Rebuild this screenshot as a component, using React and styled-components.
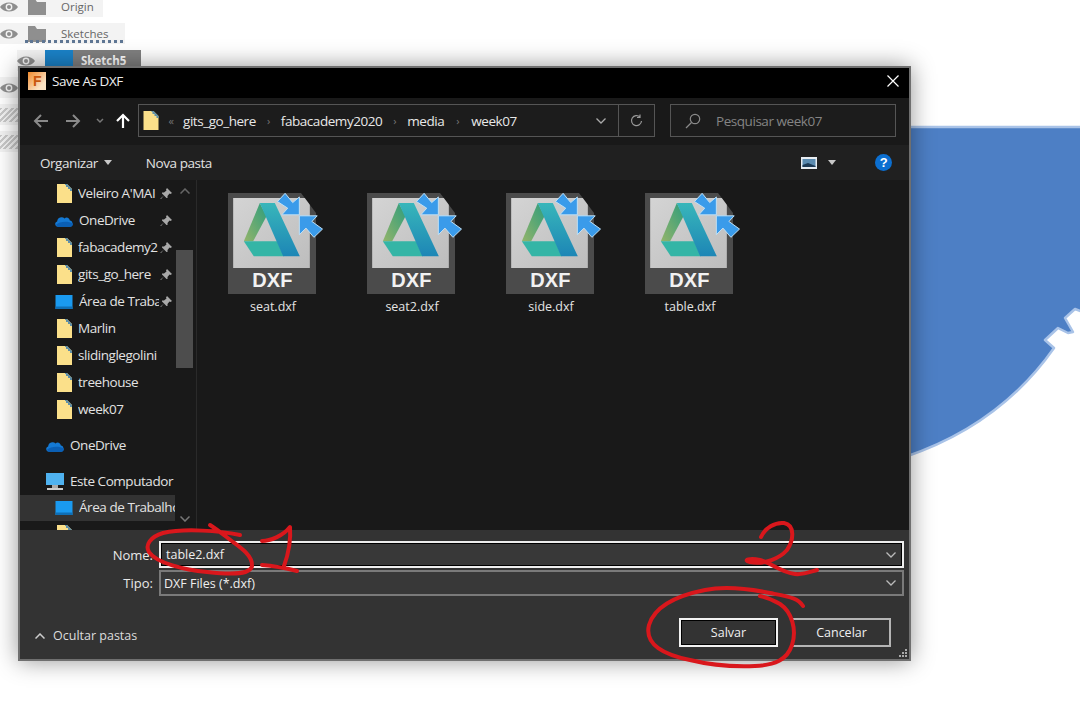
import React from "react";
import styled, { createGlobalStyle } from "styled-components";

const Global = createGlobalStyle`
  html, body { margin: 0; padding: 0; background: #fff; }
  body { font-family: "Open Sans", "Noto Sans", "Liberation Sans", sans-serif; }
`;

const Page = styled.div`
  position: relative; width: 1080px; height: 712px; overflow: hidden; background: #fff;
`;

/* background: Fusion browser tree */
const Tree = styled.div`
  display: flex; flex-direction: column; gap: 6px; margin-top: -4px; align-items: flex-start;
`;
const TreeRow = styled.div`
  position: relative; display: flex; align-items: center; height: 21px;
  margin-left: ${p => p.$indent || 0}px; width: ${p => p.$w}px; background: #f3f3f3;
  font-size: 11.5px; color: #666;
`;
const Eye = styled.svg`width: 18px; height: 12px; flex: none;`;
const TreeFolder = styled.svg`width: 18px; height: 16px; flex: none; margin: 0 15px 0 10px;`;
const Squiggle = styled.span`
  position: absolute; left: 25px; right: 2px; bottom: 1px; border-bottom: 3px dotted #5f7795;
`;
const SketchTile = styled.span`width: 28px; height: 21px; flex: none; margin-left: 10px; background: #1b83c9;`;
const SketchLabel = styled.span`
  flex: 1; height: 21px; line-height: 21px; padding-left: 8px; background: #808080; color: #fff; font-weight: 700;
`;
const EyeIcon = ({ c = "#8e8e8e" }) => (
  <Eye viewBox="0 0 18 12"><path d="M0 6C4 0 14 0 18 6 14 12 4 12 0 6Z" fill={c} /><circle cx="9" cy="6" r="3.4" fill="#f3f3f3" /><circle cx="9" cy="6" r="2" fill={c} /></Eye>
);
const TreeFolderIcon = () => (
  <TreeFolder viewBox="0 0 18 16"><path d="M0 0H7L9 3H18V16H0Z" fill="#8f8f8f" /></TreeFolder>
);
const Hatch = styled.span`
  width: 18px; height: 14px; flex: none;
  background: repeating-linear-gradient(135deg, #c9c9c9 0 2px, #f3f3f3 2px 4px);
`;

const Canvas = styled.svg`position: absolute; inset: 0; width: 1080px; height: 712px;`;

/* dialog */
const Dialog = styled.div`
  position: absolute; left: 18px; top: 66px; width: 889px; height: 591px;
  border: 2px solid #6f6f6f; display: flex; flex-direction: column; background: #191919;
  color: #e4e4e4; font-size: 13.5px; letter-spacing: -.45px; box-shadow: 0 0 22px rgba(0,0,0,.42);
`;
const TitleBar = styled.div`
  height: 30px; flex: none; background: #000; display: flex; align-items: center; padding: 0 8px 4px 8px; gap: 6px; box-sizing: border-box;
`;
const Title = styled.span`flex: 1; font-size: 13.5px; color: #eee;`;
const AppIcon = styled.span`
  width: 18px; height: 18px; flex: none; display: flex; align-items: center; justify-content: center;
  background: linear-gradient(135deg, #f08a2c, #fbe2c3 75%); color: #c9570d; font: 700 14px "Liberation Sans", sans-serif;
`;
const Close = styled.svg`width: 12px; height: 12px; margin-right: 2px; flex: none;`;

const AddressRow = styled.div`
  height: 47px; flex: none; display: flex; align-items: center; background: #191919; padding-left: 13px; box-sizing: border-box; padding-bottom: 2px;
`;
const NavIcon = styled.svg`width: ${p => p.$w || 16}px; height: 16px; flex: none; margin-right: ${p => p.$mr || 0}px;`;
const AddressBox = styled.div`
  width: 517px; height: 33px; box-sizing: border-box; border: 1px solid #555; display: flex; align-items: center;
  margin-left: 8px; padding-left: 4px; flex: none; background: #1c1c1c;
`;
const Crumb = styled.span`font-size: 13.5px; color: #e8e8e8; white-space: nowrap;`;
const Sep = styled.span`width: ${p => p.$w || 25}px; text-align: center; color: #777; font-size: 11px; flex: none;`;
const Spring = styled.span`flex: 1;`;
const BoxButton = styled.span`
  width: 35px; height: 31px; flex: none; border-left: 1px solid #555; display: flex; align-items: center; justify-content: center; margin-left: 12px;
`;
const SearchBox = styled.div`
  width: 226px; height: 33px; box-sizing: border-box; border: 1px solid #555; margin-left: 15px; flex: none;
  display: flex; align-items: center; gap: 15px; padding-left: 14px; color: #848484; font-size: 13.5px; background: #1c1c1c;
`;

const ToolBar = styled.div`
  height: 35px; flex: none; background: #202020; display: flex; align-items: center; padding-left: 20px; padding-right: 17px;
`;
const ToolText = styled.span`font-size: 13.5px; color: #e2e2e2; margin-right: ${p => p.$mr || 0}px;`;
const Caret = styled.span`
  width: 0; height: 0; border: 4.5px solid transparent; border-top: 5px solid #c9c9c9; border-bottom: 0; flex: none;
  margin-left: ${p => p.$ml || 0}px; margin-right: ${p => p.$mr || 0}px;
`;
const ViewIcon = styled.svg`width: 16px; height: 12px; flex: none;`;
const Help = styled.span`
  width: 17px; height: 17px; border-radius: 50%; background: #0c6fd0; color: #fff; flex: none; margin-left: 39px;
  display: flex; align-items: center; justify-content: center; font: 700 13px "Liberation Sans", sans-serif;
`;

const Main = styled.div`flex: 1; min-height: 0; display: flex; background: #191919; overflow: hidden;`;
const Side = styled.div`width: 155px; flex: none; overflow: hidden; display: flex; flex-direction: column;`;
const SideRow = styled.div`
  height: ${p => p.$h || 27}px; flex: none; display: flex; align-items: center; box-sizing: border-box;
  padding-left: ${p => p.$pad || 37}px; margin-top: ${p => p.$mt || 0}px; gap: 6px;
  background: ${p => p.$active ? "#333" : "transparent"}; position: relative;
  font-size: 13.5px; color: #e2e2e2; white-space: nowrap;
`;
const SideLabel = styled.span`flex: 1; min-width: 0; overflow: hidden; margin-bottom: 2px;`;
const Pin = styled.svg`width: 12px; height: 12px; flex: none; margin: 0 3px 0 -5px;`;
const Scroll = styled.div`
  width: 17px; flex: none; margin: 0 3px 0 1px; display: flex; flex-direction: column; align-items: center; background: #191919;
`;
const ScrollEnd = styled.svg`width: 10px; height: 6px; flex: none; margin: ${p => p.$m};`;
const Thumb = styled.div`width: 17px; height: 118px; background: #4d4d4d; flex: none; margin-top: ${p => p.$mt}px;`;
const Files = styled.div`
  flex: 1; border-left: 1px solid #2a2a2a; display: flex; align-items: flex-start; gap: 45px; padding: 13px 0 0 31px; background: #191919;
`;
const FileCell = styled.div`width: 94px; display: flex; flex-direction: column; align-items: flex-start; flex: none;`;
const TileWrap = styled.div`position: relative; width: 88px; height: 101px; flex: none;`;
const Tile = styled.div`
  width: 88px; height: 101px; background: #4b4b4b; box-sizing: border-box; padding: 5px 5px 0 5px;
  display: flex; flex-direction: column; align-items: flex-start;
  clip-path: polygon(0 0, 73px 0, 88px 20px, 88px 100%, 0 100%);
`;
const Art = styled.svg`width: 77px; height: 70px; flex: none; display: block;`;
const DxfMark = styled.span`
  width: 79px; text-align: center; font: 700 20px/25px "Liberation Sans", sans-serif; color: #f2f2f2; letter-spacing: .2px;
`;
const Arrows = styled.svg`position: absolute; left: 47px; top: -2px; width: 50px; height: 48px;`;
const FileName = styled.span`width: 90px; text-align: center; margin-top: 4px; font-size: 12.5px; letter-spacing: 0; color: #e4e4e4;`;

const Bottom = styled.div`
  position: relative; height: 129px; flex: none; background: #333; box-sizing: border-box; padding: 11px 5px 0 0; display: flex; flex-direction: column;
  letter-spacing: 0;
`;
const Field = styled.div`display: flex; align-items: center; gap: 6px; margin-bottom: 2px;`;
const FieldLabel = styled.span`width: 133px; flex: none; text-align: right; font-size: 13px; color: #e8e8e8;`;
const Input = styled.div`
  flex: 1; height: ${p => p.$h}px; box-sizing: border-box; display: flex; align-items: center; justify-content: space-between;
  border: 2px solid ${p => p.$focus ? "#eee" : "#7a7a7a"}; box-shadow: ${p => p.$focus ? "inset 0 0 0 1px #000" : "none"};
  padding: 0 6px 0 ${p => p.$focus ? 5 : 3}px; background: #383838; font-size: 12.5px; color: #eee;
`;
const Chevron = styled.svg`width: 10px; height: 6px; flex: none;`;
const Footer = styled.div`display: flex; align-items: center; margin-top: 20px; padding-right: 13px;`;
const Hide = styled.span`
  flex: 1; display: flex; align-items: center; gap: 8px; padding-left: 15px; font-size: 12.5px; color: #ddd; margin-top: 6px;
`;
const Btn = styled.div`
  width: 99px; height: 29px; box-sizing: border-box; display: flex; align-items: center; justify-content: center; margin-left: ${p => p.$ml || 0}px;
  border: 2px solid ${p => p.$primary ? "#f2f2f2" : "#b5b5b5"}; box-shadow: ${p => p.$primary ? "inset 0 0 0 1px #000" : "none"};
  background: #333; color: #f0f0f0; font-size: 12.5px;
`;
const Grip = styled.svg`position: absolute; right: 1px; bottom: 1px; width: 10px; height: 10px;`;
const Ink = styled.svg`position: absolute; inset: 0; width: 1080px; height: 712px; pointer-events: none;`;

const FolderIcon = ({ w = 15, h = 19 }) => (
  <svg width={w} height={h} viewBox="0 0 15 19" style={{ flex: "none" }}>
    <path d="M0 0H10L15 5V19H0Z" fill="#fbe08a" />
    <path d="M8 0H10L15 5V7H13V5H11V3H9V1H8Z" fill="#5f8fa8" />
  </svg>
);
const Cloud = () => (
  <svg width="18" height="13" viewBox="0 0 17 12" style={{ flex: "none" }}>
    <path d="M3 12C0 12-1 8 2 7 2 3 7 2 9 4 11 2 14 4 14 6 17 6 18 12 14 12Z" fill="#1479d4" />
    <path d="M1 10C4 7 12 6 17 9 17 11 15 12 14 12H3C2 12 1.400 11 1 10Z" fill="#0a5fb5" />
  </svg>
);
const Screen = () => (
  <svg width="18" height="14" viewBox="0 0 17 14" style={{ flex: "none" }}>
    <rect width="17" height="14" fill="#1a9af0" /><rect y="11.500" width="17" height="2.500" fill="#0f6fb5" />
  </svg>
);
const Computer = () => (
  <svg width="18" height="18" viewBox="0 0 18 18" style={{ flex: "none" }}>
    <rect width="18" height="12" fill="#4fb2f0" /><rect x="6" y="12" width="6" height="3" fill="#aaa" /><rect x="1" y="15" width="16" height="2" fill="#ccc" />
  </svg>
);
const PinIcon = () => (
  <Pin viewBox="0 0 12 12"><path d="M7 0L12 5 10.500 6 9.500 5.500 7.500 8 7.500 10 6.500 10 4 7.500 1 11 .5 11 .5 10.500 4 7.500 2 5.500 2 4.500 4 4.500 6.500 2.500 6 1.500Z" fill="#a9a9a9" /></Pin>
);

const DxfIcon = ({ id }) => (
  <TileWrap>
    <Tile>
      <Art viewBox="40 40 230 210">
        <defs>
          <linearGradient id={`p${id}`} x1="0" y1="0" x2="1" y2="1"><stop offset="0" stopColor="#d4d4d4" /><stop offset="1" stopColor="#bdbdbd" /></linearGradient>
          <linearGradient id={`r${id}`} x1="0" y1="0" x2="0" y2="1"><stop offset="0" stopColor="#38b6ba" /><stop offset="1" stopColor="#1d86b6" /></linearGradient>
          <linearGradient id={`l${id}`} x1="1" y1="0" x2="0" y2="1"><stop offset="0" stopColor="#2f9d7c" /><stop offset="1" stopColor="#93b46a" /></linearGradient>
        </defs>
        <rect x="40" y="40" width="230" height="210" fill={`url(#p${id})`} />
        <path d="M120 55L140 95 100 170H72Z" fill={`url(#l${id})`} />
        <path d="M72 170H172L192 215H102Z" fill="#34b5a6" />
        <path d="M120 55H165L240 215H190Z" fill={`url(#r${id})`} />
      </Art>
      <DxfMark>DXF</DxfMark>
    </Tile>
    <Arrows viewBox="165 20 150 145">
      <path d="M238 92H185L203 72 172 52 195 27 218 55 238 38Z" fill="#3a9bea" stroke="#bfe0f5" strokeWidth="3" />
      <path d="M238 95H292L276 112 308 135 282 160 258 132 238 152Z" fill="#3a9bea" stroke="#bfe0f5" strokeWidth="3" />
    </Arrows>
  </TileWrap>
);

const pinned = [
  ["folder", "Veleiro A'MAI"], ["cloud", "OneDrive"], ["folder", "fabacademy2"], ["folder", "gits_go_here"], ["screen", "Área de Traba"],
];
const recent = ["Marlin", "slidinglegolini", "treehouse", "week07"];
const files = ["seat.dxf", "seat2.dxf", "side.dxf", "table.dxf"];
const sideIcon = { folder: <FolderIcon />, cloud: <Cloud />, screen: <Screen /> };

export default function App() {
  return (
    <Page>
      <Global />
      <Tree>
        <TreeRow $w={103}><EyeIcon /><TreeFolderIcon />Origin</TreeRow>
        <TreeRow $w={125}><EyeIcon /><TreeFolderIcon />Sketches<Squiggle /></TreeRow>
        <TreeRow $w={124} $indent={17}><EyeIcon /><SketchTile /><SketchLabel>Sketch5</SketchLabel></TreeRow>
        <TreeRow $w={18}><EyeIcon /></TreeRow>
        <TreeRow $w={18}><Hatch /></TreeRow>
        <TreeRow $w={18}><Hatch /></TreeRow>
      </Tree>
      <Canvas viewBox="0 0 1080 712">
        <path d="M800 127H1083V312L1075 309 1065 318 1073 332 1068 333 1058 328 1045 340 1054 348Q1000 425 905 457H800Z" fill="#4d7fc5" stroke="#a9c3e8" strokeWidth="2.500" strokeLinejoin="round" />
      </Canvas>
      <Dialog>
        <TitleBar>
          <AppIcon>F</AppIcon>
          <Title>Save As DXF</Title>
          <Close viewBox="0 0 12 12"><path d="M.5.5L11.500 11.500M11.500.5L.5 11.500" stroke="#fff" strokeWidth="1.200" /></Close>
        </TitleBar>
        <AddressRow>
          <NavIcon $mr={16} viewBox="0 0 16 16"><path d="M15 8H2M8 2L2 8 8 14" fill="none" stroke="#8a8a8a" strokeWidth="2" /></NavIcon>
          <NavIcon $mr={14} viewBox="0 0 16 16"><path d="M1 8H14M8 2L14 8 8 14" fill="none" stroke="#8a8a8a" strokeWidth="2" /></NavIcon>
          <NavIcon $w={10} $mr={11} viewBox="0 0 10 16"><path d="M2 6L5 9 8 6" fill="none" stroke="#777" strokeWidth="1.500" /></NavIcon>
          <NavIcon $w={14} viewBox="0 0 14 16"><path d="M7 15V2M1 8L7 2 13 8" fill="none" stroke="#fff" strokeWidth="2.200" /></NavIcon>
          <AddressBox>
            <FolderIcon w={16} h={19} />
            <Sep $w={24}>«</Sep>
            <Crumb>gits_go_here</Crumb><Sep>›</Sep>
            <Crumb>fabacademy2020</Crumb><Sep>›</Sep>
            <Crumb>media</Crumb><Sep $w={27}>›</Sep>
            <Crumb>week07</Crumb>
            <Spring />
            <Chevron viewBox="0 0 10 6"><path d="M.5.5L5 5 9.500.5" fill="none" stroke="#aaa" strokeWidth="1.300" /></Chevron>
            <BoxButton>
              <svg width="13" height="13" viewBox="0 0 13 13"><path d="M10 3A5 5 0 1 0 11.500 7M10 .5V3.500H7" fill="none" stroke="#999" strokeWidth="1.200" /></svg>
            </BoxButton>
          </AddressBox>
          <SearchBox>
            <svg width="16" height="16" viewBox="0 0 16 16" style={{ flex: "none" }}><circle cx="10" cy="6" r="4.700" fill="none" stroke="#8a8a8a" strokeWidth="1.200" /><path d="M6.500 9.500L1 15" stroke="#8a8a8a" strokeWidth="1.300" /></svg>
            Pesquisar week07
          </SearchBox>
        </AddressRow>
        <ToolBar>
          <ToolText>Organizar</ToolText>
          <Caret $ml={6} $mr={34} />
          <ToolText>Nova pasta</ToolText>
          <Spring />
          <ViewIcon viewBox="0 0 16 12"><rect width="16" height="12" fill="#e8edf2" /><rect x="1.500" y="2" width="13" height="8" fill="#5b8bb0" /><path d="M1.500 8L7 6 14.500 9V10H1.500Z" fill="#1d3a55" /></ViewIcon>
          <Caret $ml={11} />
          <Help>?</Help>
        </ToolBar>
        <Main>
          <Side>
            {pinned.map(([k, t]) => (
              <SideRow key={t} $pad={k === "cloud" || k === "screen" ? 35 : 37}>
                {sideIcon[k]}<SideLabel>{t}</SideLabel><PinIcon />
              </SideRow>
            ))}
            {recent.map(t => <SideRow key={t}><FolderIcon /><SideLabel>{t}</SideLabel></SideRow>)}
            <SideRow $mt={9} $pad={26}><Cloud /><SideLabel>OneDrive</SideLabel></SideRow>
            <SideRow $mt={9} $pad={26}><Computer /><SideLabel>Este Computador</SideLabel></SideRow>
            <SideRow $active $pad={35} $h={26}><Screen /><SideLabel>Área de Trabalho</SideLabel></SideRow>
            <SideRow $pad={37}><FolderIcon /></SideRow>
          </Side>
          <Scroll>
            <ScrollEnd $m="8px 0 0" viewBox="0 0 10 6"><path d="M.5 5.500L5 1 9.500 5.500" fill="none" stroke="#666" strokeWidth="1.500" /></ScrollEnd>
            <Thumb $mt={56} />
            <Spring />
            <ScrollEnd $m="0 0 8px" viewBox="0 0 10 6"><path d="M.5.5L5 5 9.500.5" fill="none" stroke="#777" strokeWidth="1.500" /></ScrollEnd>
          </Scroll>
          <Files>
            {files.map((f, i) => (
              <FileCell key={f}>
                <DxfIcon id={i} />
                <FileName>{f}</FileName>
              </FileCell>
            ))}
          </Files>
        </Main>
        <Bottom>
          <Field>
            <FieldLabel>Nome:</FieldLabel>
            <Input $focus $h={27}>table2.dxf<Chevron viewBox="0 0 10 6"><path d="M.5.5L5 5 9.500.5" fill="none" stroke="#bbb" strokeWidth="1.300" /></Chevron></Input>
          </Field>
          <Field>
            <FieldLabel>Tipo:</FieldLabel>
            <Input $h={26}>DXF Files (*.dxf)<Chevron viewBox="0 0 10 6"><path d="M.5.5L5 5 9.500.5" fill="none" stroke="#bbb" strokeWidth="1.300" /></Chevron></Input>
          </Field>
          <Footer>
            <Hide>
              <svg width="10" height="6" viewBox="0 0 10 6"><path d="M.5 5.500L5 1 9.500 5.500" fill="none" stroke="#ccc" strokeWidth="1.500" /></svg>
              Ocultar pastas
            </Hide>
            <Btn $primary>Salvar</Btn>
            <Btn $ml={14}>Cancelar</Btn>
          </Footer>
          <Grip viewBox="0 0 10 10" fill="#aaa"><rect x="7" y="1" width="2" height="2" /><rect x="4" y="4" width="2" height="2" /><rect x="7" y="4" width="2" height="2" /><rect x="1" y="7" width="2" height="2" /><rect x="4" y="7" width="2" height="2" /><rect x="7" y="7" width="2" height="2" /></Grip>
        </Bottom>
      </Dialog>
      <Ink viewBox="0 0 1080 712" fill="none" stroke="#d9171c" strokeWidth="4" strokeLinecap="round" strokeLinejoin="round">
        <path d="M240 535C220 531 185 528 163 533 150 537 145 545 149 552 156 563 185 570 207 572 225 574 250 576 252 566 253 556 240 547 233 542 225 536 218 530 210 525" />
        <path d="M262 541C270 541 283 536 290 527 291 540 288 555 284 566M262 565C275 566 285 568 297 571" />
        <path d="M761 537C765 528 775 522 784 523 795 525 794 540 787 550 780 558 765 565 750 562 742 560 750 558 760 560 772 563 780 572 795 574 803 575 810 572 817 570" />
        <path d="M803 606C798 598 790 597 770 593 750 589 725 586 705 590 680 595 655 605 649 625 644 645 665 655 690 660 710 665 730 667 755 666 775 665 787 660 792 645 797 630 792 612 780 604 772 599 765 597 760 596" />
      </Ink>
    </Page>
  );
}
